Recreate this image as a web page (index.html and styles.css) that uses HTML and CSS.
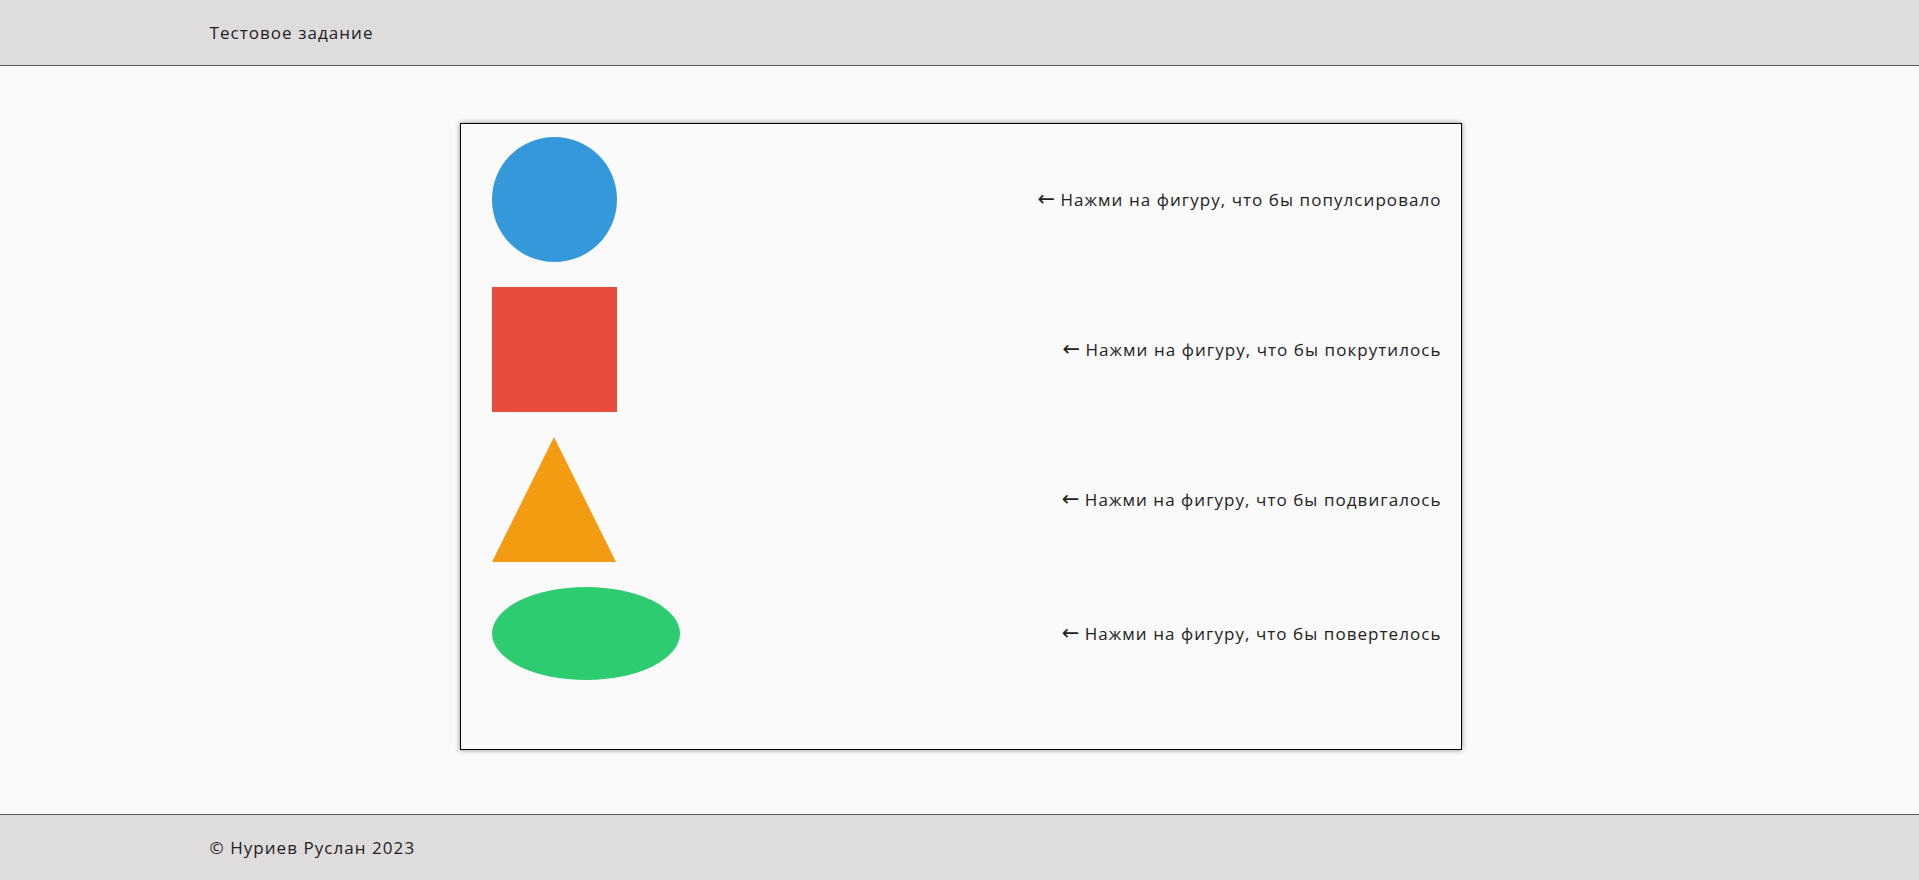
FILE: index.html
```html
<!DOCTYPE html>
<html lang="ru">
<head>
<meta charset="utf-8">
<title>Тестовое задание</title>
<link rel="stylesheet" href="styles.css">
</head>
<body>
<header class="header">
  <div class="container">Тестовое задание</div>
</header>
<main class="main">
  <div class="board">
    <div class="row">
      <div class="shape circle"></div>
      <p class="hint"><span class="arrow">←</span> Нажми на фигуру, что бы популсировало</p>
    </div>
    <div class="row">
      <div class="shape square"></div>
      <p class="hint"><span class="arrow">←</span> Нажми на фигуру, что бы покрутилось</p>
    </div>
    <div class="row">
      <div class="shape triangle"></div>
      <p class="hint"><span class="arrow">←</span> Нажми на фигуру, что бы подвигалось</p>
    </div>
    <div class="row">
      <div class="shape ellipse"></div>
      <p class="hint"><span class="arrow">←</span> Нажми на фигуру, что бы повертелось</p>
    </div>
  </div>
</main>
<footer class="footer">
  <div class="container">© Нуриев Руслан 2023</div>
</footer>
</body>
</html>
```
FILE: styles.css
```css
* { box-sizing: border-box; }
html, body { margin: 0; padding: 0; }
body {
  background: #fafafa;
  color: #222;
  font-family: "Open Sans", "Noto Sans", sans-serif;
  font-size: 17px;
  letter-spacing: 1.05px;
  min-height: 100vh;
  display: flex;
  flex-direction: column;
}
.container {
  width: 100%;
  max-width: 1500px;
  margin: 0 auto;
}
.header {
  height: 66px;
  background: #dedcdd;
  border-bottom: 1px solid #555;
  display: flex;
  align-items: center;
}
.footer {
  height: 66px;
  background: #dedcdd;
  border-top: 1px solid #555;
  display: flex;
  align-items: center;
}
.main {
  flex: 1;
  padding: 57px 0 64px 2px;
}
.board {
  width: 1002px;
  margin: 0 auto;
  border: 1px solid #000;
  box-shadow: 0 0 5px rgba(0, 0, 0, 0.45);
  padding: 13px 19px 69px 31px;
  display: flex;
  flex-direction: column;
  gap: 25px;
}
.row {
  display: flex;
  justify-content: space-between;
  align-items: center;
}
.hint { margin: 0; }
.arrow {
  font-family: "DejaVu Sans", sans-serif;
  font-size: 21px;
  line-height: 1;
  letter-spacing: 0;
}
.shape { flex: none; }
.circle {
  width: 125px;
  height: 125px;
  border-radius: 50%;
  background: #3498db;
}
.square {
  width: 125px;
  height: 125px;
  background: #e74c3c;
}
.triangle {
  width: 0;
  height: 0;
  border-left: 62.5px solid transparent;
  border-right: 62.5px solid transparent;
  border-bottom: 125px solid #f39c12;
}
.ellipse {
  width: 188px;
  height: 93px;
  border-radius: 50%;
  background: #2ecc71;
}
```
